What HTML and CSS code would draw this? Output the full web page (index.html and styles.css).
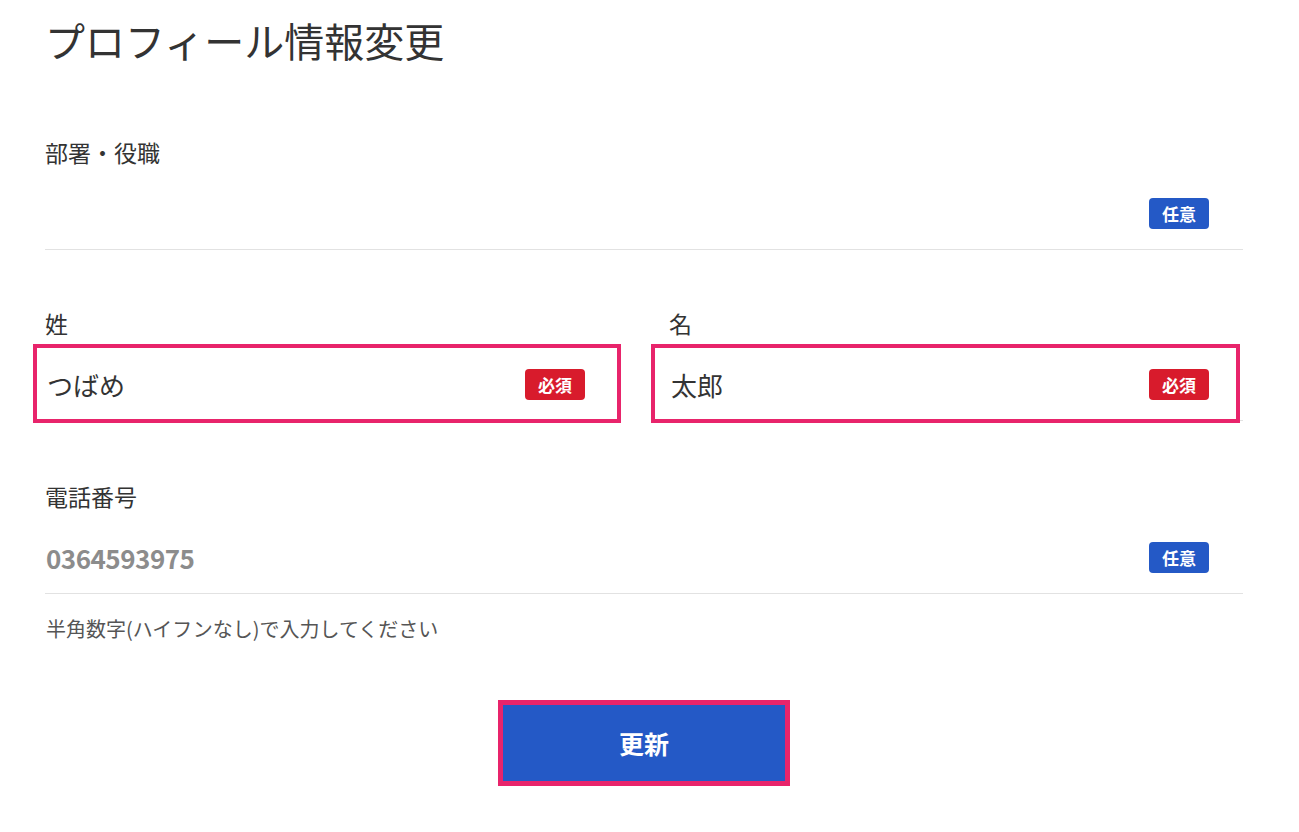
FILE: index.html
```html
<!DOCTYPE html>
<html lang="ja">

<head>
   <meta charset="utf-8" />
   <title>プロフィール情報変更</title>
   <meta name="viewport" content="width=device-width, initial-scale=1">
   <link rel="stylesheet" href="styles.css">
</head>

<body>
   <main class="profile-form">
      <h1 class="page-title">プロフィール情報変更</h1>

      <div class="field field-first">
         <label class="field-label">部署・役職</label>
         <div class="field-input">
            <span class="field-value"></span>
            <span class="badge badge-optional">任意</span>
         </div>
      </div>

      <div class="field-pair">
         <div class="field">
            <label class="field-label">姓</label>
            <div class="field-input marked marked-left">
               <span class="field-value">つばめ</span>
               <span class="badge badge-required">必須</span>
            </div>
         </div>
         <div class="field">
            <label class="field-label">名</label>
            <div class="field-input marked marked-right">
               <span class="field-value">太郎</span>
               <span class="badge badge-required">必須</span>
            </div>
         </div>
      </div>

      <div class="field field-phone">
         <label class="field-label">電話番号</label>
         <div class="field-input">
            <span class="field-value placeholder">0364593975</span>
            <span class="badge badge-optional">任意</span>
         </div>
         <p class="field-help">半角数字(ハイフンなし)で入力してください</p>
      </div>

      <div class="actions">
         <button class="submit-btn" type="button">更新</button>
      </div>
   </main>
</body>

</html>
```

FILE: styles.css
```css
* {
   box-sizing: border-box
}

html {
   margin: 0;
   padding: 0;
}

body {
   margin: 0;
   background: #ffffff;
   color: #333;
   font-family: "Noto Sans CJK JP", "Noto Sans", sans-serif;
}

.profile-form {
   width: 1243px;
   padding: 17px 0 46px 45px;
}

.page-title {
   margin: 0;
   font-size: 40px;
   line-height: 46px;
   font-weight: 400;
   color: #333;
}

.field {
   margin-top: 58px
}

.field-first {
   margin-top: 74px
}

.field-phone {
   margin-top: 60px
}

.field-label {
   display: block;
   font-size: 23px;
   line-height: 30px;
   margin-bottom: 10px;
   color: #333;
}

.field-input {
   position: relative;
   display: flex;
   align-items: center;
   justify-content: space-between;
   height: 73px;
   padding: 0 34px 0 2px;
   border-bottom: 1px solid #e2e2e2;
}

.field-value {
   font-size: 26px;
   color: #333;
}

.field-value.placeholder {
   margin-left: -1px;
   font-size: 26px;
   font-weight: 600;
   letter-spacing: -0.5px;
   color: #8c8c8c;
}

.badge {
   display: inline-flex;
   align-items: center;
   justify-content: center;
   width: 60px;
   height: 31px;
   border-radius: 4px;
   color: #fff;
   font-size: 17px;
   font-weight: 700;
}

.badge-optional {
   background: #2459c6
}

.badge-required {
   background: #d81b2c
}

.field-pair {
   display: grid;
   grid-template-columns: 1fr 1fr;
   gap: 50px;
}

.field-pair .field {
   margin-top: 58px
}

/* pink annotation frames */
.marked::after {
   content: "";
   position: absolute;
   border: 4px solid #e8246b;
   pointer-events: none;
}

.marked-left::after {
   inset: -4px -2px -3px -12px
}

.marked-right::after {
   inset: -4px 3px -3px -18px
}

.field-help {
   margin: 22px 0 0 1px;
   font-size: 20px;
   line-height: 26px;
   color: #555;
}

.actions {
   display: flex;
   justify-content: center;
   margin-top: 63px;
}

.submit-btn {
   width: 282px;
   height: 76px;
   border: 0;
   border-radius: 0;
   background: #2459c6;
   outline: 5px solid #e8246b;
   color: #fff;
   font-family: "Noto Sans CJK JP", "Noto Sans", sans-serif;
   font-size: 25px;
   font-weight: 700;
   cursor: pointer;
}
```
